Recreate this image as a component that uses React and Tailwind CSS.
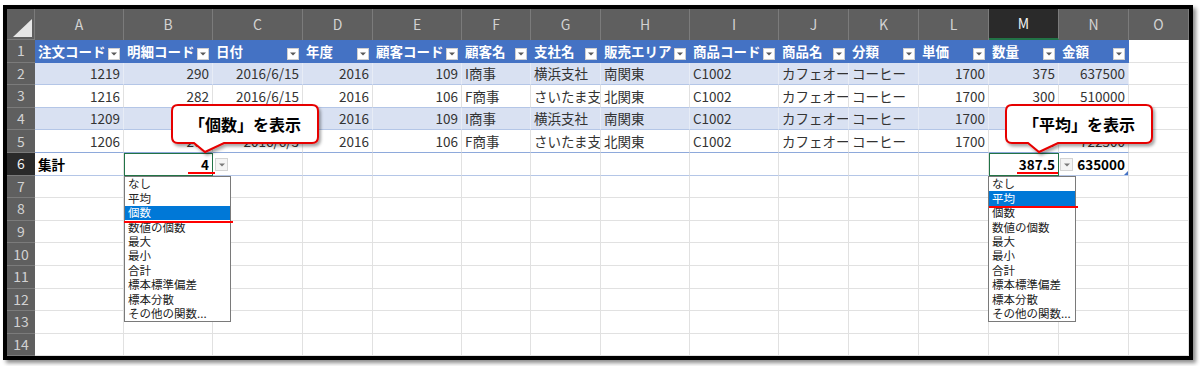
import clsx from "clsx";

const COLS = ["A", "B", "C", "D", "E", "F", "G", "H", "I", "J", "K", "L", "M", "N", "O"];

const HEAD = [
  "注文コード", "明細コード", "日付", "年度", "顧客コード", "顧客名", "支社名",
  "販売エリア", "商品コード", "商品名", "分類", "単価", "数量", "金額",
];

const RIGHT = [true, true, true, true, true, false, false, false, false, false, false, true, true, true];

const DATA = [
  ["1219", "290", "2016/6/15", "2016", "109", "I商事", "横浜支社", "南関東", "C1002", "カフェオーレ", "コーヒー", "1700", "375", "637500"],
  ["1216", "282", "2016/6/15", "2016", "106", "F商事", "さいたま支社", "北関東", "C1002", "カフェオーレ", "コーヒー", "1700", "300", "510000"],
  ["1209", "275", "2016/6/8", "2016", "109", "I商事", "横浜支社", "南関東", "C1002", "カフェオーレ", "コーヒー", "1700", "450", "765000"],
  ["1206", "268", "2016/6/3", "2016", "106", "F商事", "さいたま支社", "北関東", "C1002", "カフェオーレ", "コーヒー", "1700", "425", "722500"],
];

const MENU = ["なし", "平均", "個数", "数値の個数", "最大", "最小", "合計", "標本標準偏差", "標本分散", "その他の関数..."];

const gridCell = "border-r border-b border-[#e1e1e1] bg-white";

function Arrow({ fill = "#595959" }) {
  return (
    <svg width="6" height="4" viewBox="0 0 6 4">
      <path d="M0 0.5h6L3 3.5z" fill={fill} />
    </svg>
  );
}

function FilterButton() {
  return (
    <span className="absolute bottom-[3px] right-[4px] flex h-[12px] w-[12px] items-center justify-center border border-[#cfcfcf] bg-white">
      <Arrow />
    </span>
  );
}

function Callout({ className, children }) {
  return (
    <div className={clsx("absolute h-[56px] w-[156px]", className)}>
      <svg width="156" height="56" viewBox="0 0 156 56" className="absolute left-0 top-0 overflow-visible">
        <defs>
          <filter id="calloutShadow" x="-10%" y="-10%" width="130%" height="140%">
            <feDropShadow dx="2" dy="2.5" stdDeviation="1.5" floodColor="#000" floodOpacity="0.35" />
          </filter>
        </defs>
        <path
          d="M8 2H142Q148 2 148 8V34Q148 40 142 40H54L35 49L24 40H8Q2 40 2 34V8Q2 2 8 2Z"
          fill="#fff"
          stroke="#e60000"
          strokeWidth="2"
          filter="url(#calloutShadow)"
        />
      </svg>
      <div className="absolute left-[2px] top-[2px] flex h-[38px] w-[146px] items-center justify-center text-[16px] font-bold text-black">
        {children}
      </div>
    </div>
  );
}

function SummaryList({ className, selected }) {
  return (
    <div className={clsx("absolute flex h-[146px] flex-col border border-[#7a7a7a] bg-white text-[11.5px] leading-none text-[#222]", className)}>
      {MENU.map((m, i) => (
        <div
          key={m}
          className={clsx("flex h-[14.4px] items-center whitespace-nowrap pl-[3px]", i === selected && "bg-[#0078d7] text-white")}
        >
          {m}
        </div>
      ))}
    </div>
  );
}

function DropButton({ className }) {
  return (
    <div className={clsx("absolute top-[149px] flex h-[13px] w-[13px] items-center justify-center border border-[#d4d4d4] bg-[#f4f4f4]", className)}>
      <Arrow fill="#7a7a7a" />
    </div>
  );
}

function rowCells(n) {
  if (n === 1) {
    return COLS.map((c, ci) =>
      ci < 14 ? (
        <div
          key={c}
          className="relative flex items-center overflow-hidden whitespace-nowrap bg-[#4472c4] pl-[3px] font-bold text-white"
        >
          {HEAD[ci]}
          <FilterButton />
        </div>
      ) : (
        <div key={c} className={gridCell} />
      )
    );
  }

  if (n >= 2 && n <= 5) {
    const banded = n % 2 === 0;
    return COLS.map((c, ci) =>
      ci < 14 ? (
        <div
          key={c}
          className={clsx(
            "flex items-center overflow-hidden whitespace-nowrap border-b border-r px-[3px]",
            RIGHT[ci] ? "justify-end" : "justify-start",
            banded ? "bg-[#d9e1f2] border-r-[#e7ecf6]" : "bg-white border-r-[#e1e1e1]",
            n === 5 ? "border-b-[#8ea9db]" : "border-b-[#b4c6e7]"
          )}
        >
          {DATA[n - 2][ci]}
        </div>
      ) : (
        <div key={c} className={gridCell} />
      )
    );
  }

  if (n === 6) {
    return COLS.map((c, ci) => {
      if (ci === 14) return <div key={c} className={gridCell} />;
      if (ci === 1 || ci === 12) {
        return (
          <div key={c} className="flex items-center justify-end border border-[#217346] bg-white px-[3px] font-bold text-black">
            {ci === 1 ? "4" : "387.5"}
          </div>
        );
      }
      return (
        <div
          key={c}
          className={clsx(
            "relative flex items-center border-b border-r border-b-[#b4c6e7] border-r-[#e1e1e1] bg-white px-[3px] font-bold text-black",
            ci === 13 ? "justify-end" : "justify-start"
          )}
        >
          {ci === 0 && "集計"}
          {ci === 13 && "635000"}
          {ci === 13 && (
            <svg className="absolute bottom-0 right-0" width="4" height="4" viewBox="0 0 4 4">
              <path d="M4 0V4H0z" fill="#4472c4" />
            </svg>
          )}
        </div>
      );
    });
  }

  return COLS.map((c) => <div key={c} className={gridCell} />);
}

export default function App() {
  const rows = Array.from({ length: 14 }, (_, i) => i + 1);

  return (
    <div className="min-h-[366px] bg-white pl-[3px] pt-[5px] font-['Noto_Sans_CJK_JP','Noto_Sans',sans-serif]">
      <div className="relative w-[1190px] border-4 border-black shadow-[3px_3px_4px_rgba(0,0,0,0.45)]">
        <div className="grid auto-rows-[22.6px] grid-cols-[28px_89px_89px_90px_70px_89px_69px_70px_89px_89px_70px_70px_70px_70px_70px_60px] grid-rows-[31px] text-[13.5px] text-[#333]">
          {/* column headers */}
          <div className="relative border-b border-r border-[#7b7b7b] bg-[#5f5f5f]">
            <svg className="absolute bottom-[2px] right-[2px]" width="19" height="18" viewBox="0 0 19 18">
              <polygon points="19,0 19,18 0,18" fill="#e6e6e6" />
            </svg>
          </div>
          {COLS.map((c) => (
            <div
              key={c}
              className={clsx(
                "flex items-center justify-center border-r border-[#7b7b7b] text-[14px]",
                c === "M" ? "border-b-2 border-b-[#217346] bg-[#2a2a2a] text-[#f2f2f2]" : "bg-[#5f5f5f] text-[#d2d2d2]"
              )}
            >
              {c}
            </div>
          ))}

          {rows.map((n) => [
            <div
              key={`h${n}`}
              className={clsx(
                "flex items-center justify-center border-b border-[#7b7b7b] text-[14px]",
                n === 6 ? "bg-[#2a2a2a] text-[#f2f2f2]" : "bg-[#5f5f5f] text-[#d2d2d2]"
              )}
            >
              {n}
            </div>,
            ...rowCells(n),
          ])}
        </div>

        {/* overlays */}
        <DropButton className="left-[208px]" />
        <DropButton className="left-[1053px]" />

        <div className="absolute left-[181px] top-[163px] h-[2px] w-[27px] bg-[#ff0000]" />
        <div className="absolute left-[1010px] top-[163px] h-[2px] w-[41px] bg-[#ff0000]" />

        <SummaryList className="left-[117px] top-[167px] w-[107px]" selected={2} />
        <SummaryList className="left-[981px] top-[167px] w-[88px]" selected={1} />

        <div className="absolute left-[117px] top-[212px] h-[2px] w-[109px] bg-[#ff0000]" />
        <div className="absolute left-[982px] top-[197px] h-[2px] w-[89px] bg-[#ff0000]" />

        <Callout className="left-[163px] top-[94px]">「個数」を表示</Callout>
        <Callout className="left-[997px] top-[94px]">「平均」を表示</Callout>
      </div>
    </div>
  );
}
